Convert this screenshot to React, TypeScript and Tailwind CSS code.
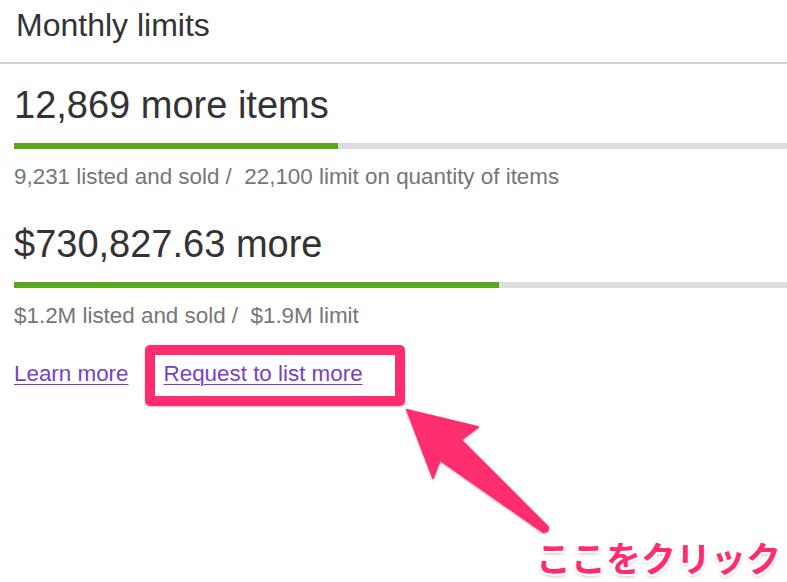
export default function App() {
  const sans = { fontFamily: '"Liberation Sans", Arial, sans-serif' };
  return (
    <div className="relative w-full h-[582px] bg-white overflow-hidden text-[#333333]" style={sans}>
      {/* Header */}
      <div className="h-[64px] border-b-2 border-[#d2d2d2] pl-[16px] pt-[1px]">
        <h2 className="text-[32px] leading-[48px] font-normal">Monthly limits</h2>
      </div>

      <div className="px-[14px]">
        {/* Items */}
        <div className="mt-[19px] text-[38px] leading-[44px]">12,869 more items</div>
        <div className="mt-[16px] -mr-[14px] h-[6px] bg-[#dddddd] flex">
          <div className="w-[324px] h-full bg-[#5ba71b]" />
        </div>
        <div className="mt-[15px] text-[22.4px] leading-[26px] text-[#767676]">
          9,231 listed and sold /&nbsp; 22,100 limit on quantity of items
        </div>

        {/* Value */}
        <div className="mt-[32px] text-[38px] leading-[44px]">$730,827.63 more</div>
        <div className="mt-[16px] -mr-[14px] h-[6px] bg-[#dddddd] flex">
          <div className="w-[485px] h-full bg-[#5ba71b]" />
        </div>
        <div className="mt-[15px] text-[22.4px] leading-[26px] text-[#767676]">
          $1.2M listed and sold /&nbsp; $1.9M limit
        </div>

        {/* Links */}
        <div className="mt-[32px] flex items-start gap-[35px] text-[22.4px] leading-[26px]">
          <a href="#" className="text-[#7a3fca] underline decoration-1 underline-offset-[3px]">
            Learn more
          </a>
          <span className="relative">
            <a href="#" className="text-[#7a3fca] underline decoration-1 underline-offset-[3px]">
              Request to list more
            </a>
            <span className="absolute left-[-19px] top-[-16px] w-[260px] h-[61px] border-[10px] border-[#ff2d6e] rounded-[5px] shadow-[0_1px_2px_rgba(0,0,0,0.25)] pointer-events-none" />
          </span>
        </div>
      </div>

      {/* Annotation arrow */}
      <svg
        className="absolute left-0 top-0 pointer-events-none"
        width="787"
        height="582"
        viewBox="0 0 787 582"
      >
        <defs>
          <filter id="sh" x="-20%" y="-20%" width="140%" height="140%">
            <feDropShadow dx="0" dy="1" stdDeviation="1.2" floodColor="#000" floodOpacity="0.3" />
          </filter>
        </defs>
        <path
          d="M407 410 L478 427 L461 440 L548 527 Q549 532 543 532 L440 460 L433 478 Z"
          fill="#ff2d6e"
          stroke="#ff2d6e"
          strokeWidth="2"
          strokeLinejoin="round"
          filter="url(#sh)"
        />
      </svg>

      <div
        className="absolute left-[536px] top-[539px] text-[35px] leading-[35px] font-bold text-[#ff2d6e] whitespace-nowrap [text-shadow:2px_0_0_#fff,-2px_0_0_#fff,0_2px_0_#fff,0_-2px_0_#fff,1.5px_1.5px_0_#fff,-1.5px_-1.5px_0_#fff,1.5px_-1.5px_0_#fff,-1.5px_1.5px_0_#fff,0_2px_4px_rgba(0,0,0,0.35)]"
        style={{ fontFamily: '"Noto Sans CJK JP", sans-serif' }}
      >
        ここをクリック
      </div>
    </div>
  );
}
